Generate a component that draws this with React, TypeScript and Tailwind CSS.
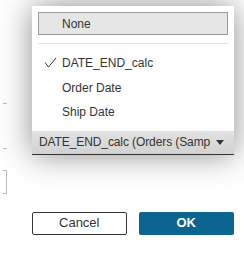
import React from "react";

const items = ["DATE_END_calc", "Order Date", "Ship Date"];

function Check() {
  return (
    <svg width="14" height="12" viewBox="0 0 14 12" className="absolute left-[6px] top-[6px]">
      <path d="M1 5.5 L4.5 10 L12 1" fill="none" stroke="#333" strokeWidth="1" />
    </svg>
  );
}

export default function App() {
  return (
    <div className="relative h-[264px] w-[244px] overflow-hidden bg-white font-['Liberation_Sans',Arial,sans-serif] text-[12px] text-[#333]">
      {/* underlying dialog marks, mostly hidden */}
      <div className="absolute left-[3px] top-[103px] h-px w-[4px] bg-[#bbb]" />
      <div className="absolute left-[3px] top-[148px] h-px w-[4px] bg-[#bbb]" />
      <div className="absolute left-[3px] top-[170px] h-[24px] w-[4px] border-y border-r border-[#bbb]" />

      <div className="flex flex-col pl-[32px] pr-[10px] pt-[6px]">
        <div className="relative z-10 shadow-[0_0_30px_rgba(0,0,0,0.45)]">
          <div className="bg-white px-[6px] pb-[6px] pt-[6px]">
            <div className="flex h-[23px] items-center border border-[#9a9a9a] bg-[#e6e6e6] pl-[23px]">
              None
            </div>
            <div className="mt-[8px] h-px bg-[#e3e3e3]" />
            <div className="mt-[7px] flex flex-col">
              {items.map((it, i) => (
                <div key={it} className="relative flex h-[24.5px] items-center pl-[24px]">
                  {i === 0 && <Check />}
                  {it}
                </div>
              ))}
            </div>
          </div>
          <div className="flex h-[24px] items-center justify-between border-b border-[#333] bg-gradient-to-b from-[#e2e2e2] to-[#d2d2d2] pl-[7px] pr-[10px]">
            <span className="whitespace-nowrap tracking-[-0.1px]">DATE_END_calc (Orders (Samp</span>
            <svg width="8" height="5" viewBox="0 0 8 5" className="shrink-0">
              <path d="M0 0 H8 L4 5 Z" fill="#333" />
            </svg>
          </div>
        </div>

        <div className="mt-[57px] flex gap-[12px]">
          <button className="flex h-[23px] w-[95px] items-center justify-center rounded-[2px] border border-[#333] bg-white text-[13px] text-[#333]">
            Cancel
          </button>
          <button className="flex h-[23px] w-[96px] items-center justify-center rounded-[2px] bg-[#0b6590] text-[13px] font-bold text-white">
            OK
          </button>
        </div>
      </div>
    </div>
  );
}
